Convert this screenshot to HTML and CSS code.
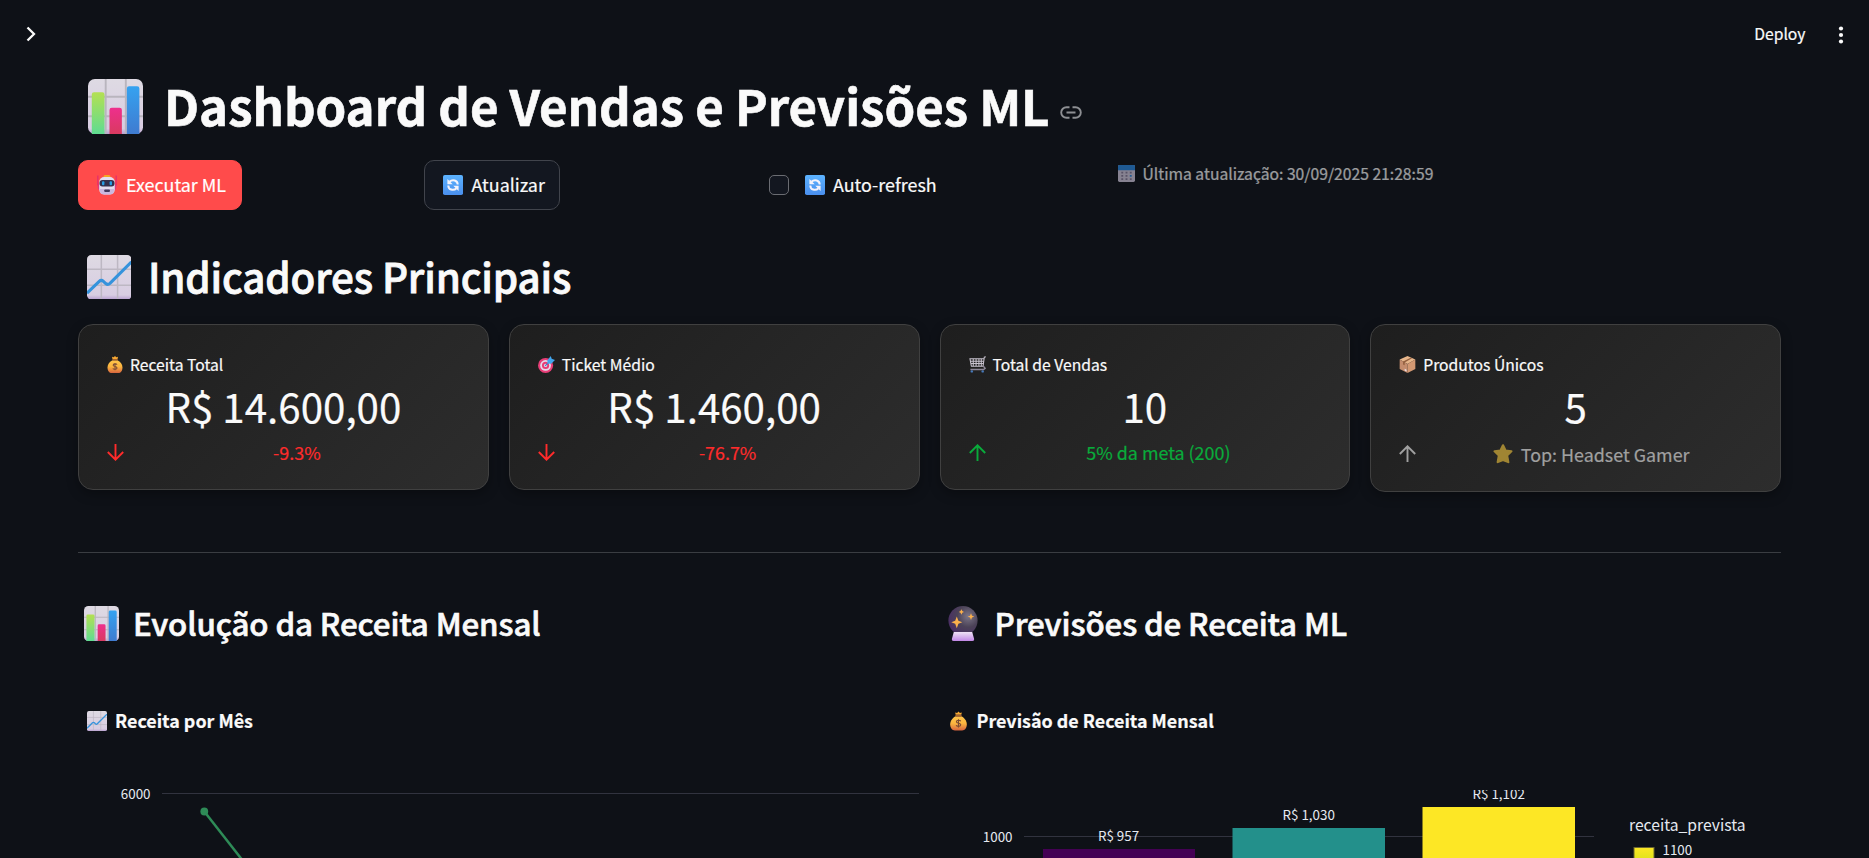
FILE: index.html
```html
<!DOCTYPE html>
<html lang="pt-BR">
<head>
<meta charset="utf-8">
<title>Dashboard de Vendas e Previsões ML</title>
<link rel="stylesheet" href="styles.css">
</head>
<body>
<svg class="defs" aria-hidden="true">
  <defs>
    <linearGradient id="paper" x1="0" y1="0" x2="0" y2="1"><stop offset="0" stop-color="#dedae3"/><stop offset=".9" stop-color="#d8cde2"/><stop offset="1" stop-color="#b79fd0"/></linearGradient>
    <linearGradient id="green" x1="0" y1="0" x2="0" y2="1"><stop offset="0" stop-color="#b4e052"/><stop offset="1" stop-color="#5fdc92"/></linearGradient>
    <linearGradient id="pink" x1="0" y1="0" x2="0" y2="1"><stop offset="0" stop-color="#ee2f8d"/><stop offset="1" stop-color="#d93a60"/></linearGradient>
    <linearGradient id="blue" x1="0" y1="0" x2="0" y2="1"><stop offset="0" stop-color="#35a2f0"/><stop offset="1" stop-color="#3f7bd0"/></linearGradient>
    <linearGradient id="tile" x1="0" y1="0" x2="0" y2="1"><stop offset="0" stop-color="#5cb3ff"/><stop offset="1" stop-color="#4a8fee"/></linearGradient>
    <linearGradient id="gold" x1="0" y1="0" x2="0" y2="1"><stop offset="0" stop-color="#ffc54a"/><stop offset=".5" stop-color="#fbb53f"/><stop offset="1" stop-color="#d7653f"/></linearGradient>
    <radialGradient id="ball" cx=".68" cy=".35" r=".75"><stop offset="0" stop-color="#7d7788"/><stop offset=".5" stop-color="#4b4257"/><stop offset="1" stop-color="#4a2c66"/></radialGradient>
    <linearGradient id="base" x1="0" y1="0" x2="0" y2="1"><stop offset="0" stop-color="#efe3f5"/><stop offset="1" stop-color="#c187e6"/></linearGradient>
  </defs>
  <symbol id="i-bars" viewBox="0 0 32 32">
    <rect width="32" height="32" rx="4" fill="url(#paper)"/>
    <path d="M10.3 0v32M22 0v32M0 10.3h32M0 21.7h32" stroke="#b9b5be" stroke-width="1.1"/>
    <path d="M2.2 32V9a1.3 1.3 0 0 1 1.3-1.3h4.8A1.3 1.3 0 0 1 9.600 9v23z" fill="url(#green)"/>
    <path d="M12.500 32V18a1.300 1.300 0 0 1 1.300-1.300h4.600a1.300 1.300 0 0 1 1.300 1.300v14z" fill="url(#pink)"/>
    <path d="M22.600 32V5.500a1.300 1.300 0 0 1 1.300-1.300h4.700a1.300 1.300 0 0 1 1.300 1.300V32z" fill="url(#blue)"/>
  </symbol>
  <symbol id="i-trend" viewBox="0 0 32 32">
    <rect width="32" height="32" rx="3" fill="url(#paper)"/>
    <path d="M10.300 0v32M22 0v32M0 10.300h32M0 21.700h32" stroke="#bdb8c3" stroke-width="1.100"/>
    <path d="M0 27.500l8.800-8.600q1.500-1.400 3 0l1.700 1.600q1.500 1.300 3-.1L32 5" fill="none" stroke="#3593dc" stroke-width="2.200"/>
  </symbol>
  <symbol id="i-robot" viewBox="0 0 20 20">
    <path d="M.8.5v10M19.200.5v10" stroke="#e8306a" stroke-width="1.400"/>
    <rect x="6.500" y="0" width="7" height="3" rx="1.500" fill="#f5a623"/>
    <rect x=".8" y="9" width="18.400" height="6" rx="2" fill="#e0387c"/>
    <rect x="2.200" y="2" width="15.600" height="17.500" rx="5" fill="#e4dcef"/>
    <path d="M3 14h14v2q0 3.500-4 3.500H7q-4 0-4-3.500z" fill="#cbb8df"/>
    <rect x="2.500" y="5" width="15" height="6.600" rx="3" fill="#33304d"/>
    <rect x="5" y="6.300" width="2.400" height="4" rx="1" fill="#279fe5"/><rect x="12.600" y="6.300" width="2.400" height="4" rx="1" fill="#279fe5"/>
    <rect x="7.300" y="14.500" width="5.600" height="2.500" rx=".8" fill="#443a5c"/>
  </symbol>
  <symbol id="i-sync" viewBox="0 0 20 20">
    <rect width="20" height="20" rx="1.800" fill="url(#tile)"/>
    <path d="M6.500 6.800C9.500 3.800 14.700 5.200 14.700 9.600M13.500 13.200C10.500 16.200 5.300 14.800 5.300 10.400" fill="none" stroke="#f4f3fb" stroke-width="2"/>
    <path d="M4.400 3.900v5.300h5.300zM15.600 16.100v-5.300h-5.300z" fill="#f4f3fb"/>
  </symbol>
  <symbol id="i-cal" viewBox="0 0 18 18">
    <rect width="18" height="18" rx="1.500" fill="#d6cde2"/>
    <path d="M0 5.500V1.500Q0 0 1.500 0h15Q18 0 18 1.500v4z" fill="#2b8ce6"/>
    <path d="M3.500 8h2M8 8h2M12.500 8h2M3.500 11.500h2M8 11.500h2M3.500 15h2M8 15h2M12.500 15h2" stroke="#8a7f9c" stroke-width="1.800"/><path d="M12.500 11.500h2" stroke="#2b8ce6" stroke-width="1.800"/>
  </symbol>
  <symbol id="i-bag" viewBox="0 0 18 20">
    <path d="M6 3.500L5.500 1l2 .4L9 0l1.500 1.400 2-.4-.5 2.500z" fill="#f7a832"/>
    <path d="M6 5h6c3 1.500 5.800 4.500 5.800 8.500 0 4-2 6.500-5 6.500H5.200c-3 0-5-2.500-5-6.500C.2 9.500 3 6.500 6 5z" fill="url(#gold)"/>
    <rect x="5.600" y="3.400" width="6.800" height="2" rx="1" fill="#a5632f"/>
    <path d="M11.400 10.200c-.5-1.200-4.600-1.500-4.600.6s4.600 1.200 4.600 3.300-4.300 1.900-4.900.4M9 8.200v8.600" fill="none" stroke="#7a4a35" stroke-width="1.200"/>
  </symbol>
  <symbol id="i-target" viewBox="0 0 18 18">
    <circle cx="8" cy="10" r="8" fill="#e83e77"/><circle cx="8" cy="10" r="5.700" fill="#e6dcec"/><circle cx="8" cy="10" r="3.800" fill="#e83e77"/><circle cx="8" cy="10" r="1.700" fill="#e6dcec"/>
    <path d="M7.500 10.500l4.500-4.300" stroke="#3f7fc9" stroke-width="1.300"/><path d="M10 8V4.500L13.500 0l1 3 3.500 1.300-4 4z" fill="#41a5ee"/>
  </symbol>
  <symbol id="i-cart" viewBox="0 0 18 18">
    <path d="M17.800.8l-1.600.5-1.300 9.500H2.500L1 2.800h14.500M4.500 3v7.500M7.500 3v7.500M10.500 3v7.500M13 3v7.500M1.500 5.500h13.500M2 8h12.700" fill="none" stroke="#c9c3cf" stroke-width="1.100"/>
    <path d="M15 10.500l2 2.500-1.500 1.300H1.500" fill="none" stroke="#8e8898" stroke-width="1.500"/><circle cx="3" cy="16.300" r="1.300" fill="#4779b9"/><circle cx="14.500" cy="16.300" r="1.300" fill="#4779b9"/>
  </symbol>
  <symbol id="i-box" viewBox="0 0 18 18">
    <path d="M9 0l8.300 3.800L9 8.500.7 3.800z" fill="#e7b68b"/><path d="M.7 3.800L9 8.500V18L.7 13.800z" fill="#c48c6d"/><path d="M17.300 3.800L9 8.500V18l8.300-4.200z" fill="#d39872"/>
    <path d="M4.300 5.900l8-4.100 1.500.7-7.800 4.400v3l-1.700-.9z" fill="#94603f"/><path d="M6 13.500l2 1v2l-2-1z" fill="#eadfe6"/>
  </symbol>
  <symbol id="i-star" viewBox="0 0 20 20">
    <path d="M10 1.300l2.500 5.200 5.900.8-4.300 4.100 1.200 6.700L10 16l-5.300 2.100 1.200-6.700L1.600 7.300l5.900-.8z" fill="#e3b93b" stroke="#e3b93b" stroke-width="2.200" stroke-linejoin="round"/>
  </symbol>
  <symbol id="i-ball" viewBox="0 0 30 35">
    <circle cx="15" cy="14.600" r="14.600" fill="url(#ball)"/>
    <path d="M5.800 26h18.400l1.800 6.500q.6 2.500-1.600 2.500H5.600Q3.400 35 4 32.500z" fill="url(#base)"/>
    <path d="M8.800 10.500l1.600 4.200 3.900 1.500-3.900 1.600-1.600 4.400-1.600-4.400-3.900-1.600 3.900-1.500zM13.400 3.300l.9 1.800 1.700.8-1.700.8-.9 2-.9-2-1.700-.8 1.700-.8zM23 7.300l1 2.400 2.300.9-2.300.9-1 2.600-1-2.600-2.300-.9 2.300-.9z" fill="#fbb04c"/>
  </symbol>
  <symbol id="i-down" viewBox="0 0 17 17"><path d="M8.500 0v15.500M.8 8l7.700 7.700L16.200 8" fill="none" stroke="currentColor" stroke-width="1.900"/></symbol>
  <symbol id="i-up" viewBox="0 0 17 17"><path d="M8.500 17V1.500M.8 9l7.700-7.700L16.200 9" fill="none" stroke="currentColor" stroke-width="1.900"/></symbol>
</svg>

<header class="topbar">
  <svg class="chevron" viewBox="0 0 10 16"><path d="M1.500 1.500L8 8l-6.500 6.500" fill="none" stroke="currentColor" stroke-width="2.300"/></svg>
  <span class="deploy">Deploy</span>
  <svg class="dots" viewBox="0 0 6 18"><circle cx="3" cy="2.500" r="2.100"/><circle cx="3" cy="9" r="2.100"/><circle cx="3" cy="15.500" r="2.100"/></svg>
</header>

<main class="page">
  <h1 class="title"><svg class="emoji"><use href="#i-bars"/></svg><span class="title-text">Dashboard de Vendas e Previsões ML</span>
    <svg class="link" viewBox="0 0 22 13"><path d="M9.500 1.200H6.500a5.300 5.300 0 0 0 0 10.600h3M12.500 1.200h3a5.300 5.300 0 0 1 0 10.600h-3M6.500 6.500h9" fill="none" stroke="currentColor" stroke-width="1.900"/></svg>
  </h1>

  <div class="tools">
    <div><button class="btn primary"><svg class="emoji"><use href="#i-robot"/></svg><span class="btn-text">Executar ML</span></button></div>
    <div><button class="btn"><svg class="emoji"><use href="#i-sync"/></svg><span class="btn-text">Atualizar</span></button></div>
    <label class="check"><span class="checkbox"></span><svg class="emoji"><use href="#i-sync"/></svg><span class="btn-text">Auto-refresh</span></label>
    <div class="updated"><svg class="emoji"><use href="#i-cal"/></svg><span>Última atualização: 30/09/2025 21:28:59</span></div>
  </div>

  <h2 class="section"><svg class="emoji"><use href="#i-trend"/></svg><span>Indicadores Principais</span></h2>

  <div class="cards">
    <section class="card">
      <div class="label"><svg class="emoji bag"><use href="#i-bag"/></svg><span>Receita Total</span></div>
      <div class="value">R$ 14.600,00</div>
      <div class="delta red"><svg class="arrow"><use href="#i-down"/></svg><span class="delta-text">-9.3%</span></div>
    </section>
    <section class="card">
      <div class="label"><svg class="emoji"><use href="#i-target"/></svg><span>Ticket Médio</span></div>
      <div class="value">R$ 1.460,00</div>
      <div class="delta red"><svg class="arrow"><use href="#i-down"/></svg><span class="delta-text">-76.7%</span></div>
    </section>
    <section class="card">
      <div class="label"><svg class="emoji"><use href="#i-cart"/></svg><span>Total de Vendas</span></div>
      <div class="value">10</div>
      <div class="delta green"><svg class="arrow"><use href="#i-up"/></svg><span class="delta-text">5% da meta (200)</span></div>
    </section>
    <section class="card tall">
      <div class="label"><svg class="emoji"><use href="#i-box"/></svg><span>Produtos Únicos</span></div>
      <div class="value">5</div>
      <div class="delta gray"><svg class="arrow"><use href="#i-up"/></svg><span class="delta-text"><svg class="emoji star"><use href="#i-star"/></svg>Top: Headset Gamer</span></div>
    </section>
  </div>

  <hr class="rule">

  <div class="charts">
    <section class="panel">
      <h3 class="heading"><svg class="emoji"><use href="#i-bars"/></svg><span>Evolução da Receita Mensal</span></h3>
      <h4 class="subheading"><svg class="emoji"><use href="#i-trend"/></svg><span>Receita por Mês</span></h4>
      <svg class="plot" viewBox="78 740 841 118">
        <path class="grid" d="M162 793.500H919"/>
        <text x="150.500" y="799" text-anchor="end">6000</text>
        <path d="M204.300 811.500L241.500 859" stroke="#2e8b57" stroke-width="2.500"/><circle cx="204.300" cy="811.500" r="3.900" fill="#2e8b57"/>
      </svg>
    </section>
    <section class="panel">
      <h3 class="heading"><svg class="emoji ball"><use href="#i-ball"/></svg><span>Previsões de Receita ML</span></h3>
      <h4 class="subheading"><svg class="emoji bag"><use href="#i-bag"/></svg><span>Previsão de Receita Mensal</span></h4>
      <svg class="plot" viewBox="940 740 841 118">
        <clipPath id="plotarea"><rect x="1024" y="790" width="570" height="68"/></clipPath>
        <path class="grid" d="M1024 836.500h570"/>
        <text x="1012.500" y="842" text-anchor="end">1000</text>
        <rect x="1043" y="849" width="152" height="9" fill="#440154"/>
        <rect x="1232.500" y="828" width="152.500" height="30" fill="#23908b"/>
        <rect x="1422.500" y="807" width="152.500" height="51" fill="#fde725"/>
        <g clip-path="url(#plotarea)" text-anchor="middle">
          <text x="1118.500" y="841">R$ 957</text>
          <text x="1308.700" y="820">R$ 1,030</text>
          <text x="1498.700" y="799">R$ 1,102</text>
        </g>
        <linearGradient id="scale" x1="0" y1="0" x2="0" y2="1"><stop offset="0" stop-color="#fde725"/><stop offset="1" stop-color="#dce319"/></linearGradient>
        <text class="legend" x="1629" y="831">receita_prevista</text>
        <rect x="1634" y="847.500" width="20" height="14" fill="url(#scale)" stroke="#6b6632"/>
        <text x="1662.500" y="855">1100</text>
      </svg>
    </section>
  </div>
</main>
</body>
</html>
```
FILE: styles.css
```css
* { box-sizing: border-box; }
body {
  margin: 0;
  height: 858px;
  overflow: hidden;
  background: #0e1117;
  color: #fafafa;
  font-family: "Noto Sans CJK SC", "Noto Sans", sans-serif;
  font-size: 17.9px;
  -webkit-text-stroke: .2px currentColor;
}
.defs { position: absolute; width: 0; height: 0; }
svg { display: block; flex: none; }
span { white-space: nowrap; }
h1, h2, h3, h4 { margin: 0; display: flex; align-items: center; }

.topbar { display: flex; align-items: center; height: 68px; padding: 0 25.5px 0 26px; }
.chevron { width: 10px; height: 16px; }
.deploy { margin-left: auto; font-size: 15.7px; line-height: 26px; }
.dots { width: 6px; height: 18px; margin: 1px 0 0 32px; fill: #fafafa; }

.page { padding: 0 88px 0 78px; }

.title { height: 73px; font-size: 49.2px; line-height: 73px; font-weight: 700; letter-spacing: -.03px; -webkit-text-stroke-width: .6px; }
.title .emoji { width: 55px; height: 55px; margin: 4px 21px 0 10px; }
.link { width: 22px; height: 13px; margin: 15px 0 0 11px; color: #8d8f93; }

.tools { display: grid; grid-template-columns: repeat(4, 325.500px); gap: 20px; margin-top: 19px; height: 50px; }
.btn {
  display: flex; align-items: center; height: 50px; padding: 0 14px 0 18px;
  border: 1px solid #41444c; border-radius: 10px; background: #131720;
  color: #fafafa; font: inherit; line-height: 30px;
}
.btn-text { padding-bottom: 2px; }
.btn .emoji { width: 20px; height: 20px; margin-right: 9px; }
.btn.primary { padding-right: 15px; border-color: #ff4b4b; background: #ff4b4b; color: #fff; }
.check { display: flex; align-items: center; line-height: 30px; }
.checkbox { width: 20px; height: 20px; border: 1px solid #6a6c72; border-radius: 5px; background: #131720; }
.check .emoji { width: 20px; height: 20px; margin: 0 8px 0 16px; }
.updated { display: flex; align-items: center; height: 27px; padding-left: 3px; font-size: 15.700px; line-height: 27px; opacity: .6; }
.updated .emoji { width: 17px; height: 17px; margin-right: 8px; }

.section { height: 51px; margin-top: 40px; font-size: 40.300px; line-height: 51px; font-weight: 500; letter-spacing: -.14px; -webkit-text-stroke-width: .8px; }
.section .emoji { width: 44.5px; height: 44.5px; margin: 3px 17px 0 8.5px; }

.cards { display: grid; grid-template-columns: repeat(4, 1fr); gap: 20px; align-items: start; margin-top: 23px; height: 168px; }
.card {
  height: 166px; padding: 25px 25px 0; border: 1px solid #404040; border-radius: 15px;
  background: linear-gradient(135deg, #1e1e1e, #2d2d2d); box-shadow: 0 4px 12px rgba(0, 0, 0, .3);
}
.card.tall { height: 168px; }
.label { display: flex; align-items: center; height: 28px; padding: 2px 0 0 3px; font-size: 15.700px; line-height: 26px; }
.label .emoji { width: 17px; height: 17px; margin: -1px 7px 0 0; }
.label .bag { width: 16px; }
.value { height: 55px; font-size: 40.300px; line-height: 55px; text-align: center; }
.delta { display: flex; align-items: center; height: 28px; margin-top: 5px; line-height: 28px; }
.delta .arrow { width: 17px; height: 17px; margin: 0 7px 0 3px; }
.delta-text { flex: 1; display: flex; justify-content: center; align-items: center; }
.tall .delta { margin-top: 7px; }
.tall .arrow { margin-top: -2px; }
.tall .delta-text { padding-left: 4px; }
.star { width: 20px; height: 20px; margin-right: 8px; opacity: .65; }
.red { color: #ff2b2b; }
.green { color: #09ab3b; }
.gray { color: #a0a0a0; }

.rule { height: 1px; margin: 60px 0 47px; border: 0; background: #3a3d42; }

.charts { display: grid; grid-template-columns: 1fr 1fr; gap: 20px; }
.heading { height: 45px; font-size: 31.300px; line-height: 45px; font-weight: 500; letter-spacing: -.11px; -webkit-text-stroke-width: .65px; }
.heading .emoji { width: 35px; height: 35px; margin: 2px 14px 0 6px; }
.heading .ball { width: 30px; margin: 2px 17px 0 8px; }
.subheading { height: 28px; margin-top: 61px; line-height: 28px; font-size: 17.900px; font-weight: 700; }
.subheading .emoji { width: 20px; height: 20px; margin: 1px 8px 0 9px; }
.subheading .bag { width: 17px; margin: 1px 10px 0 10px; }
.plot { width: 841px; height: 118px; margin-top: 6px; }
.plot text { font-size: 13.400px; fill: #e6eaf1; -webkit-text-stroke-width: 0; }
.plot .legend { font-size: 15.700px; }
.plot .grid { stroke: #31333f; }
```
